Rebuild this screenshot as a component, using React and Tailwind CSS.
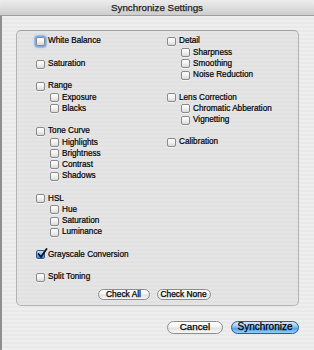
import React from 'react';

const font = { fontFamily: '"Liberation Sans", Arial, sans-serif' };

const Box = ({ checked, focused }) => (
  <span
    className={`relative inline-block w-[9px] h-[9px] shrink-0 rounded-[2px] border ${
      checked
        ? 'border-[#2c5a94] bg-[linear-gradient(180deg,#cfe4fb_0%,#7fb3ec_50%,#3d86dc_100%)]'
        : 'border-[#8a8a8a] bg-[linear-gradient(180deg,#ffffff_0%,#f1f1f1_50%,#d9d9d9_100%)]'
    } ${focused ? 'shadow-[0_0_0_1.5px_#7eaae3,0_0_2px_2px_#a9c8ee]' : 'shadow-[0_1px_0_rgba(255,255,255,0.6)]'}`}
  >
    {checked && (
      <svg className="absolute left-[0px] top-[-3px]" width="11" height="11" viewBox="0 0 11 11">
        <path d="M1.5 6 L4 9 L9.5 1" fill="none" stroke="#111" strokeWidth="1.8" strokeLinecap="round" strokeLinejoin="round" />
      </svg>
    )}
  </span>
);

const Row = ({ label, sub, checked, focused }) => (
  <div className={`flex items-center h-[11.2px] gap-[3px] ${sub ? 'pl-[14px]' : ''}`}>
    <Box checked={checked} focused={focused} />
    <span className="text-[8.2px] leading-none text-black whitespace-nowrap [-webkit-text-stroke:0.2px_#000]">{label}</span>
  </div>
);

const Group = ({ first, children }) => (
  <div className={first ? '' : 'mt-[11.3px]'}>{children}</div>
);

const Pill = ({ children, primary, className = '' }) => (
  <button
    className={`flex items-center justify-center rounded-full border leading-none text-black [-webkit-text-stroke:0.25px_#000] ${
      primary
        ? 'border-[#2a5b9c] bg-[linear-gradient(180deg,#d6eafd_0%,#94c3f1_45%,#5a9de6_55%,#8fd0fb_100%)]'
        : 'border-[#8c8c8c] bg-[linear-gradient(180deg,#ffffff_0%,#f4f4f4_45%,#e2e2e2_55%,#f7f7f7_100%)]'
    } ${className}`}
  >
    {children}
  </button>
);

export default function App() {
  return (
    <div className="w-[314px] h-[350px] flex flex-col overflow-hidden bg-[#ececec]" style={font}>
      {/* title bar */}
      <div className="h-[16px] shrink-0 flex items-center justify-center rounded-t-[5px] border-b border-[#9e9e9e] bg-[linear-gradient(180deg,#ececec_0%,#dedede_50%,#cdcdcd_100%)]">
        <span className="text-[9.8px] text-[#222] pt-[2px] [-webkit-text-stroke:0.25px_#222]">Synchronize Settings</span>
      </div>

      <div className="flex-1 flex flex-col border-l-[2px] border-[#8f8f8f] pl-[14px] pr-[15px] pt-[14px] bg-[image:repeating-linear-gradient(0deg,#eeeeee_0px,#eeeeee_2px,#e9e9e9_2px,#e9e9e9_4px)]">
        {/* group box */}
        <div className="h-[276px] flex flex-col rounded-[5px] border border-[#b3b3b3] border-t-[#a0a0a0] bg-[image:repeating-linear-gradient(0deg,#e5e5e5_0px,#e5e5e5_2px,#e1e1e1_2px,#e1e1e1_4px)] pt-[5px] pl-[19px]">
          <div className="flex">
            <div className="w-[131px] flex flex-col">
              <Group first>
                <Row label="White Balance" focused />
              </Group>
              <Group>
                <Row label="Saturation" />
              </Group>
              <Group>
                <Row label="Range" />
                <Row label="Exposure" sub />
                <Row label="Blacks" sub />
              </Group>
              <Group>
                <Row label="Tone Curve" />
                <Row label="Highlights" sub />
                <Row label="Brightness" sub />
                <Row label="Contrast" sub />
                <Row label="Shadows" sub />
              </Group>
              <Group>
                <Row label="HSL" />
                <Row label="Hue" sub />
                <Row label="Saturation" sub />
                <Row label="Luminance" sub />
              </Group>
              <Group>
                <Row label="Grayscale Conversion" checked />
              </Group>
              <Group>
                <Row label="Split Toning" />
              </Group>
            </div>
            <div className="flex flex-col">
              <Group first>
                <Row label="Detail" />
                <Row label="Sharpness" sub />
                <Row label="Smoothing" sub />
                <Row label="Noise Reduction" sub />
              </Group>
              <Group>
                <Row label="Lens Correction" />
                <Row label="Chromatic Abberation" sub />
                <Row label="Vignetting" sub />
              </Group>
              <Group>
                <Row label="Calibration" />
              </Group>
            </div>
          </div>

          <div className="mt-[6px] flex justify-center gap-[7px] pr-[26px]">
            <Pill className="w-[52px] h-[11px] text-[8.4px]">Check All</Pill>
            <Pill className="w-[54px] h-[11px] text-[8.4px]">Check None</Pill>
          </div>
        </div>

        {/* dialog buttons */}
        <div className="mt-[14.5px] flex justify-end gap-[8px]">
          <Pill className="w-[56px] h-[13px] text-[9.8px]">Cancel</Pill>
          <Pill primary className="w-[68px] h-[13px] text-[10px]">Synchronize</Pill>
        </div>
      </div>
    </div>
  );
}
